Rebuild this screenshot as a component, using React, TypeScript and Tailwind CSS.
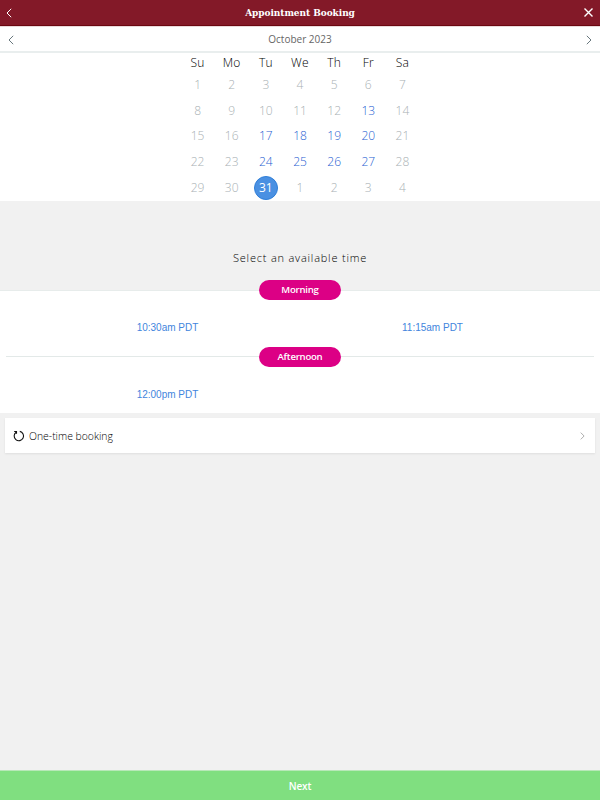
import type { ReactNode } from 'react';

const weekdays = ['Su', 'Mo', 'Tu', 'We', 'Th', 'Fr', 'Sa'];

const weeks = [
  [1, 2, 3, 4, 5, 6, 7],
  [8, 9, 10, 11, 12, 13, 14],
  [15, 16, 17, 18, 19, 20, 21],
  [22, 23, 24, 25, 26, 27, 28],
  [29, 30, 31, 1, 2, 3, 4],
];

const available = new Set([13, 17, 18, 19, 20, 24, 25, 26, 27]);

function Chevron({ dir, className }: { dir: 'left' | 'right'; className: string }) {
  return (
    <svg viewBox="0 0 6 10" fill="none" stroke="currentColor" className={className}>
      <path d={dir === 'left' ? 'M5.2 .8 1 5l4.2 4.2' : 'M.8 .8 5 5 .8 9.2'} />
    </svg>
  );
}

function Day({ day }: { day: number }) {
  if (day === 31) {
    return (
      <span className="flex size-[23.5px] items-center justify-center rounded-full border border-[#2f7fd8] bg-[#4a90e2] font-normal text-white">
        {day}
      </span>
    );
  }
  return <span className={available.has(day) ? 'text-[#1f62d2]' : 'text-[#a9b1b4]'}>{day}</span>;
}

function Pill({ children }: { children: ReactNode }) {
  return (
    <div className="relative flex h-5 w-[82px] items-center justify-center rounded-full bg-[#dc0085] text-[9.6px] font-semibold leading-none tracking-[-0.25px] text-white">
      {children}
    </div>
  );
}

function Times({ times }: { times: string[] }) {
  return (
    <div className="grid grid-cols-2 px-[35px] font-['Liberation_Sans',Arial,sans-serif] text-[10px] leading-[14px] text-[#4285dd]">
      {times.map((time) => (
        <div key={time} className="text-center">{time}</div>
      ))}
    </div>
  );
}

export default function App() {
  return (
    <div className="flex h-[800px] w-[600px] flex-col overflow-hidden bg-[#f1f1f1] font-['Open_Sans',sans-serif] text-[#444]">
      <header className="flex h-[26px] shrink-0 items-center justify-between border-b border-[#6b0710] bg-[#831928] pl-1.5 pr-[7px] text-white">
        <Chevron dir="left" className="h-[10px] w-[6px]" />
        <h1 className="pl-1 font-['DejaVu_Serif_Condensed','DejaVu_Serif',serif] text-[10px] font-bold leading-none tracking-[-0.06px]">
          Appointment Booking
        </h1>
        <svg viewBox="0 0 9 9" className="size-[9px]" fill="none" stroke="currentColor" strokeWidth="1.4">
          <path d="m.5.5 8 8m0-8-8 8" />
        </svg>
      </header>

      <div className="flex h-[27px] shrink-0 items-center justify-between border-b-2 border-t border-b-[#e9eeee] border-t-[#ead9db] bg-white pl-2 pr-2 text-[#68777d]">
        <Chevron dir="left" className="mt-px h-[10px] w-[6px]" />
        <div className="text-[10px] leading-none text-[#666]">October 2023</div>
        <Chevron dir="right" className="mt-px h-[10px] w-[6px]" />
      </div>

      <section className="h-[148px] shrink-0 bg-white">
        <div className="mx-auto grid w-[239px] grid-cols-7 text-center text-[12px] font-light leading-[19px] tracking-[0.25px] text-black">
          {weekdays.map((name) => <div key={name}>{name}</div>)}
        </div>
        <div className="mx-auto grid w-[239px] grid-cols-7 text-[12px] font-light leading-none">
          {weeks.flatMap((week, row) =>
            week.map((day, column) => (
              <div key={`${row}-${column}`} className="flex h-[25.75px] items-center justify-center">
                <Day day={day} />
              </div>
            )),
          )}
        </div>
      </section>

      <div className="flex h-[79px] shrink-0 items-end justify-center pb-[14px] text-[11px] font-light leading-[16px] tracking-[0.8px] text-black">
        Select an available time
      </div>

      <section className="flex shrink-0 flex-col bg-[linear-gradient(#f1f1f1_10px,#e7eceb_10px,#e7eceb_11px,#fff_11px)]">
        <div className="flex h-5 justify-center"><Pill>Morning</Pill></div>
        <div className="flex h-[47px] flex-col justify-start pt-[21px]">
          <Times times={['10:30am PDT', '11:15am PDT']} />
        </div>
        <div className="flex h-5 items-center px-1.5">
          <div className="-mt-px h-px flex-1 bg-[#e3e9e8]" />
          <Pill>Afternoon</Pill>
          <div className="-mt-px h-px flex-1 bg-[#e3e9e8]" />
        </div>
        <div className="h-[46px] pt-[21px]">
          <Times times={['12:00pm PDT']} />
        </div>
      </section>

      <div className="mx-[5px] mt-[5px] flex h-[35px] shrink-0 items-center bg-white pl-2 pr-[10px] shadow-[0_1px_2px_rgba(0,0,0,0.08)]">
        <svg viewBox="0 0 12 12" className="size-3 text-[#111]" fill="none" stroke="currentColor" strokeWidth="1.1">
          <path d="M3.1 2.2A4.7 4.7 0 1 0 6.8 1.4" />
          <path d="M1.2 1.5h2.3v2.3" />
        </svg>
        <span className="ml-1 flex-1 pt-[2px] text-[10.4px] font-light leading-none text-black">One-time booking</span>
        <Chevron dir="right" className="h-2 w-[5px] text-[#999]" />
      </div>

      <button className="mt-auto h-[29px] shrink-0 bg-[#80df80] pt-px text-[10px] font-semibold leading-none tracking-[-0.1px] text-white shadow-[0_-1px_0_#b8e8b8]">
        Next
      </button>
    </div>
  );
}
